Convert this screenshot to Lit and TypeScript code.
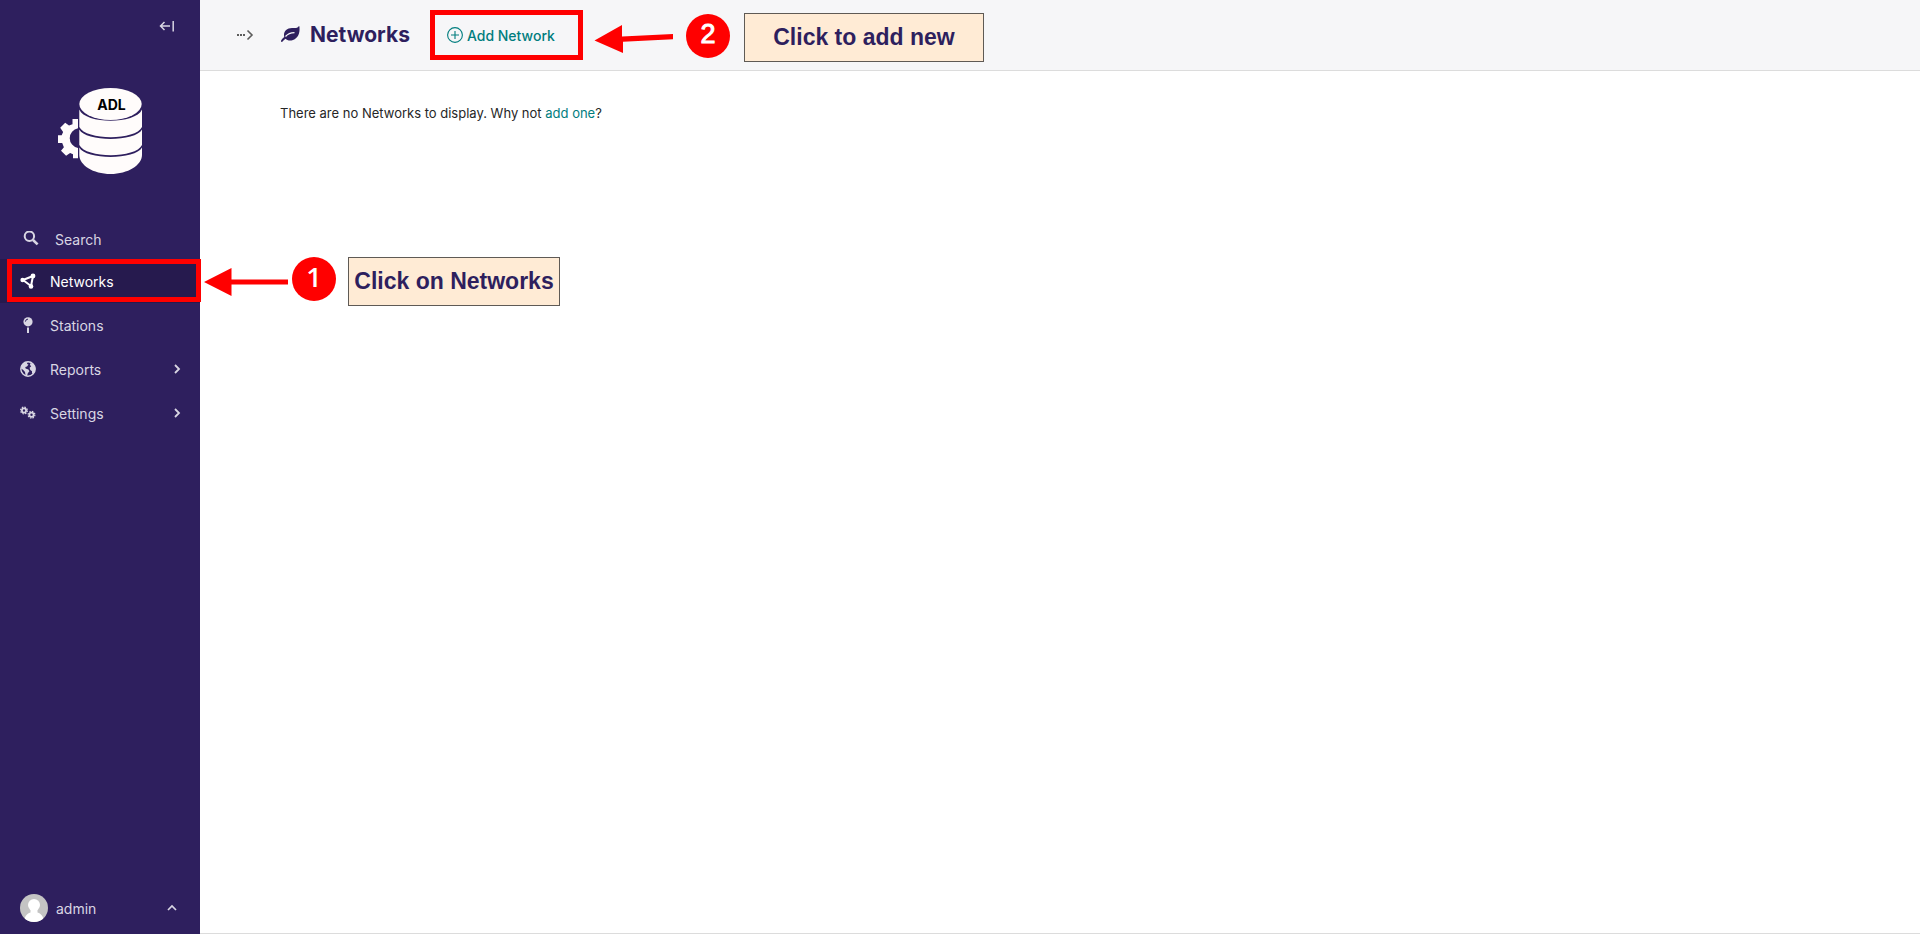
import { LitElement, html, svg, css } from "lit";
import { customElement } from "lit/decorators.js";
import { classMap } from "lit/directives/class-map.js";

const icons = {
  nodes: svg`<path d="M3 7 13 3 11 13Z" fill="none" stroke="currentColor" stroke-width="2" stroke-linejoin="round"/>
    <circle cx="2.6" cy="7" r="2.2" fill="currentColor"/><circle cx="13" cy="3" r="2.4" fill="currentColor"/><circle cx="11" cy="13.4" r="2.3" fill="currentColor"/>`,
  pin: svg`<circle cx="8" cy="4.8" r="4.6" fill="currentColor"/><path d="M5.4 4.6A2.7 2.7 0 0 1 8 2.1" fill="none" stroke="#2e1f5e" stroke-width="1"/><path d="M7 10.400h2v5.600H7z" fill="currentColor"/>`,
  globe: svg`<circle cx="8" cy="8" r="7.2" fill="none" stroke="currentColor" stroke-width="1.4"/>
    <path fill="currentColor" d="M1.500 4 4 1.600 7.500.9 7 3 8.500 3.600 7 5.500 5.300 6 5.600 7.600 8.400 8.600 9.400 10.200 7.800 12.200 7 15.200 5.500 14.400 5 11 3 8.800 1 7.500ZM10.200 2.200 13 2.600 15.300 6.500 15 10 13.400 12.800 12 12.600 12 10.300 10.300 9 9.600 6.800 11.200 5.200 10 4Z"/>`,
  cogs: svg`<g fill="none" stroke="currentColor"><circle cx="4" cy="5.500" r="2.100" stroke-width="1.800"/><circle cx="4" cy="5.500" r="3.400" stroke-width="1.200" stroke-dasharray="1.500 1.170"/>
    <circle cx="11.500" cy="9.800" r="2.100" stroke-width="1.800"/><circle cx="11.500" cy="9.800" r="3.400" stroke-width="1.200" stroke-dasharray="1.500 1.170"/></g>`,
};

const items = [
  { label: "Networks", icon: icons.nodes, active: true, sub: false },
  { label: "Stations", icon: icons.pin, active: false, sub: false },
  { label: "Reports", icon: icons.globe, active: false, sub: true },
  { label: "Settings", icon: icons.cogs, active: false, sub: true },
];

@customElement("adl-sidebar")
class AdlSidebar extends LitElement {
  static styles = css`
    :host { display: flex; flex-direction: column; background: #2e1f5e; color: #d9d6e3; }
    svg { display: block; flex: none; }
    button { font: inherit; color: inherit; background: none; border: 0; padding: 0; margin: 0; cursor: pointer; }
    .collapse { align-self: flex-end; margin: 16px 24px 0 0; padding: 1px; }
    .logo { align-self: center; margin: 52px 0 45px; }
    .logo text { font: 700 14px Inter, sans-serif; fill: #000; }
    .menu { display: flex; flex-direction: column; font-size: 14px; }
    .row { display: flex; align-items: center; height: 44px; padding: 0 16px 0 20px; gap: 14px; color: inherit; text-decoration: none; text-align: left; box-sizing: border-box; }
    .row.search { height: 40px; padding-left: 23px; gap: 16px; }
    .row.active { background: #261a4e; color: #fff; }
    .label { flex: 1; }
    .account { margin-top: auto; display: flex; align-items: center; gap: 8px; padding: 0 22px 12px 20px; font-size: 14px; text-align: left; }
  `;
  render() {
    return html`
      <button class="collapse" aria-label="Collapse sidebar">
        <svg width="16" height="18" viewBox="0 0 16 18" fill="none" stroke="#d9d6e3" stroke-width="1.500"><path d="M5.500 5 1.500 9l4 4M1.500 9H11M14.200 4v10.500"/></svg>
      </button>
      <a class="logo" href="#" aria-label="ADL home">
        <svg width="84" height="86" viewBox="58 88 84 86">
          <g fill="#fffcfb">
            <path d="M78 119h-5.500v5.200l-3.500 1.400-3.800-2.800-5 5 2.900 4.300-1.400 3.200H58v7.700h4.200l1.700 4.200-2.900 3.600 5.100 5 4-2.700 2.900 1.200v4H78v-10.300a10 10 0 0 1 0-19.700z"/>
            <ellipse cx="110.500" cy="104" rx="31.200" ry="16"/>
            <path d="M79.300 109.500c6 15 56.400 15 62.700 0v17.500c-6 13.500-56.400 13.500-62.700 0z"/>
            <path d="M79.300 129.500c6 12.500 56.400 12.500 62.700 0v15.500c-6 13.500-56.400 13.500-62.700 0z"/>
            <path d="M79.300 147.500c6 12.500 56.400 12.500 62.700 0v7.500c0 10-14 19-31.400 19s-31.300-9-31.300-19z"/>
          </g>
          <text x="111.500" y="109.500" text-anchor="middle">ADL</text>
        </svg>
      </a>
      <nav class="menu">
        <button class="row search">
          <svg width="16" height="16" viewBox="0 0 16 16" fill="none" stroke="currentColor"><circle cx="6.400" cy="5.200" r="4.700" stroke-width="2"/><path d="m10 9 4.600 4.400" stroke-width="2.600"/></svg>
          <span class="label">Search</span>
        </button>
        ${items.map((i) => html`
          <a class=${classMap({ row: true, active: i.active })} href="#">
            <svg width="16" height="16" viewBox="0 0 16 16">${i.icon}</svg>
            <span class="label">${i.label}</span>
            ${i.sub ? html`<svg width="14" height="14" viewBox="0 0 14 14" fill="none" stroke="currentColor" stroke-width="1.800"><path d="m5 3 4 4-4 4"/></svg>` : ""}
          </a>`)}
      </nav>
      <button class="account">
        <svg width="28" height="28" viewBox="0 0 28 28">
          <defs><clipPath id="c"><circle cx="14" cy="14" r="14"/></clipPath></defs>
          <g clip-path="url(#c)"><path fill="#c4c4c4" d="M0 0h28v28H0z"/><g fill="#fff"><circle cx="14" cy="11" r="6"/><path d="M10.500 14h7v4.500c4 1 6 4.500 6.500 9.500H4c.5-5 2.500-8.500 6.500-9.500z"/></g></g>
        </svg>
        <span class="label">admin</span>
        <svg width="12" height="12" viewBox="0 0 12 12" fill="none" stroke="currentColor" stroke-width="1.700"><path d="m2 8 4-4 4 4"/></svg>
      </button>
    `;
  }
}

@customElement("tutorial-marks")
class TutorialMarks extends LitElement {
  static styles = css`
    :host { position: absolute; inset: 0; pointer-events: none; overflow: hidden; font-family: "Liberation Sans", Arial, sans-serif; }
    .mark { position: absolute; box-sizing: border-box; }
    .frame { border: 5px solid #f00; }
    .badge { width: 44px; height: 44px; border-radius: 50%; background: #f00; color: #fff; font-size: 27px; line-height: 40px; text-align: center; }
    .note { height: 49px; border: 1px solid #5f5a55; background: #ffebd5; color: #2e1f5e; font-size: 23px; font-weight: 700; line-height: 47px; text-align: center; white-space: nowrap; }
    .frame-nav { left: 7px; top: 259px; width: 194px; height: 43px; }
    .frame-add { left: 430px; top: 10px; width: 153px; height: 50px; }
    .badge-one { left: 292px; top: 257px; font-family: "Open Sans", sans-serif; font-weight: 600; }
    .badge-two { left: 686px; top: 14px; -webkit-text-stroke: 1px #fff; }
    .note-one { left: 348px; top: 257px; width: 212px; }
    .note-two { left: 744px; top: 13px; width: 240px; }
    .arrow-one { left: 204px; top: 268px; }
    .arrow-two { left: 594px; top: 24px; }
  `;
  render() {
    return html`
      <div class="mark frame frame-nav"></div>
      <div class="mark frame frame-add"></div>
      <svg class="mark arrow-one" width="84" height="28" viewBox="0 0 84 28" fill="#f00"><path d="M0 14 27.500 0v11.600H84v5H27.500V28z"/></svg>
      <svg class="mark arrow-two" width="80" height="30" viewBox="0 0 80 30" fill="#f00"><path d="M.500 16.500 28 1v11.600L79 10v5.300l-50 2.400V29z"/></svg>
      <div class="mark badge badge-one">1</div>
      <div class="mark badge badge-two">2</div>
      <div class="mark note note-one">Click on Networks</div>
      <div class="mark note note-two">Click to add new</div>
    `;
  }
}

@customElement("app-root")
class AppRoot extends LitElement {
  static styles = css`
    :host { display: grid; grid-template-columns: 200px 1fr; position: relative; min-height: 100vh; background: #fff; font-family: Inter, sans-serif; color: #262626; }
    svg { display: block; flex: none; }
    a { color: #007d7e; text-decoration: none; }
    .main { display: flex; flex-direction: column; border-bottom: 1px solid #dcdcdc; }
    .header { display: flex; align-items: center; height: 70px; padding-left: 36px; background: #f6f6f8; border-bottom: 1px solid #dcdcdc; }
    .crumbs { background: none; border: 0; padding: 0; margin-right: 26px; color: #5c5c5c; }
    .title { display: flex; align-items: center; gap: 9px; margin: 0 37px 0 0; font-size: 21px; line-height: 28px; font-weight: 700; color: #2e1f5e; }
    .add { display: flex; align-items: center; gap: 4px; font-size: 14px; font-weight: 500; }
    .content { padding: 32px 80px; font-size: 13px; line-height: 20px; }
    .empty { margin: 0; }
  `;
  render() {
    return html`
      <adl-sidebar></adl-sidebar>
      <main class="main">
        <header class="header">
          <button class="crumbs" aria-label="Show breadcrumbs">
            <svg width="18" height="12" viewBox="0 0 18 12" fill="none" stroke="currentColor"><path d="M1 6h8.500" stroke-width="2" stroke-dasharray="2 1"/><path d="m11.500 1.500 4.500 4.500-4.500 4.500" stroke-width="1.600"/></svg>
          </button>
          <h1 class="title">
            <svg width="21" height="18" viewBox="0 0 21 18"><path fill="#2e1f5e" d="M19 0C17.500 2.500 15 2 12 2 7 2 4 5 4 9c0 1 .1 1.500.3 2C2.500 12.500 1 14 1 15c0 .8.700 1.200 1.300.7C3.400 14.700 4 13.600 5.600 12.700 7 14.500 10 15 13 14c5-1.700 7-7 6.500-12.500C19.500.5 19.200 0 19 0z"/><path d="M5.500 10.500C8 7.500 10.500 6.700 14.500 6.600" fill="none" stroke="#f6f6f8" stroke-width="1.300"/></svg>
            Networks
          </h1>
          <a class="add" href="#">
            <svg width="16" height="16" viewBox="0 0 16 16" fill="none" stroke="currentColor" stroke-width="1.100"><circle cx="8" cy="8" r="7.400"/><path d="M8 4v8M4 8h8"/></svg>
            Add Network
          </a>
        </header>
        <section class="content">
          <p class="empty">There are no Networks to display. Why not <a href="#">add one</a>?</p>
        </section>
      </main>
      <tutorial-marks></tutorial-marks>
    `;
  }
}
